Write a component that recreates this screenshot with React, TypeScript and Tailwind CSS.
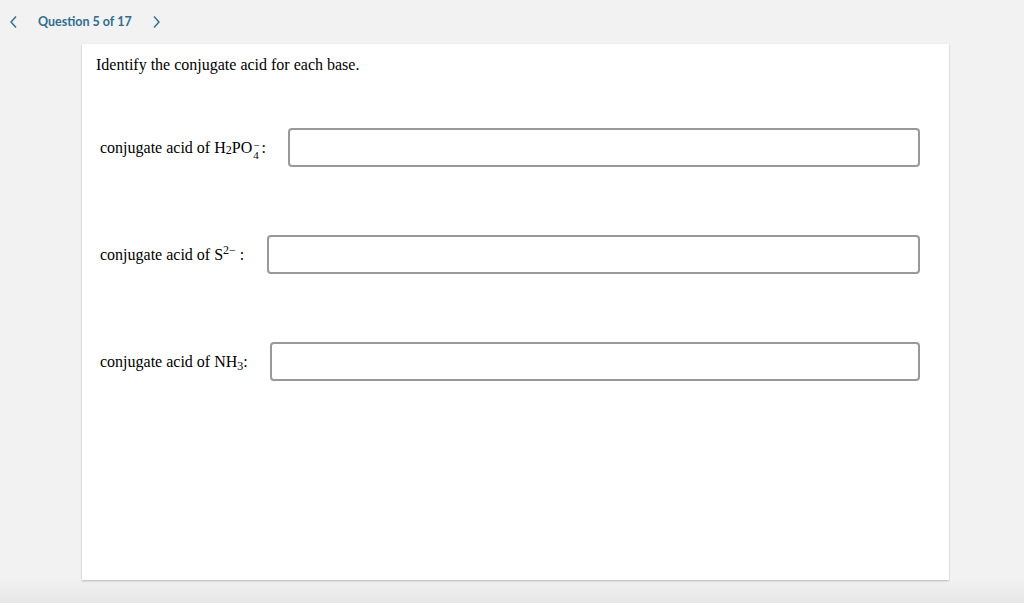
import React from "react";

const serif = { fontFamily: '"Liberation Serif", "Times New Roman", serif' };

function Stack({ sup, sub }: { sup: string; sub: string }) {
  return (
    <span className="inline-flex flex-col align-middle text-[11px] ml-[1px] relative top-[2px]">
      <span className="leading-[10px]">{sup}</span>
      <span className="leading-[11px]">{sub}</span>
    </span>
  );
}

function Row({ label, first, w }: { label: React.ReactNode; first?: boolean; w: string }) {
  return (
    <div className={`flex items-center ${first ? "mt-[53px]" : "mt-[68px]"} pl-[18px]`}>
      <div className={`${w} shrink-0 text-[16px] text-black whitespace-nowrap`} style={serif}>
        {label}
      </div>
      <div className="flex-1 h-[39px] rounded-[4px] border-2 border-[#999999] bg-white" />
    </div>
  );
}

export default function App() {
  return (
    <div className="w-[1024px] h-[603px] bg-[linear-gradient(to_bottom,#f2f2f2_96%,#e6e6e6)] overflow-hidden">
      <div className="h-[44px] flex items-center text-[#2e6e8e]" style={{ fontFamily: 'Lato, "Open Sans", sans-serif' }}>
        <svg className="ml-[9px]" width="9" height="14" viewBox="0 0 9 14" fill="none">
          <path d="M7 1.5L2 7l5 5.5" stroke="#2e6e8e" strokeWidth="1.4" />
        </svg>
        <span className="ml-[20px] text-[12.5px] font-bold">Question 5 of 17</span>
        <svg className="ml-[20px]" width="9" height="14" viewBox="0 0 9 14" fill="none">
          <path d="M2 1.5L7 7l-5 5.5" stroke="#2e6e8e" strokeWidth="1.4" />
        </svg>
      </div>
      <div className="ml-[82px] w-[867px] h-[536px] bg-white shadow-[0_1px_2px_rgba(0,0,0,0.25)] pr-[29px]">
        <div className="pt-[11px] pl-[14px] text-[16px] leading-[20px] text-black" style={serif}>
          Identify the conjugate acid for each base.
        </div>
        <Row
          first
          w="w-[188px]"
          label={
            <span>
              conjugate acid of H<sub className="text-[12px] relative top-[1px]">2</sub>PO
              <Stack sup="−" sub="4" />
              <span className="ml-[2px]">:</span>
            </span>
          }
        />
        <Row
          w="w-[167px]"
          label={
            <span>
              conjugate acid of S<sup className="text-[12px]">2−</sup> :
            </span>
          }
        />
        <Row
          w="w-[170px]"
          label={
            <span>
              conjugate acid of NH<sub className="text-[12px]">3</sub>:
            </span>
          }
        />
      </div>
    </div>
  );
}
